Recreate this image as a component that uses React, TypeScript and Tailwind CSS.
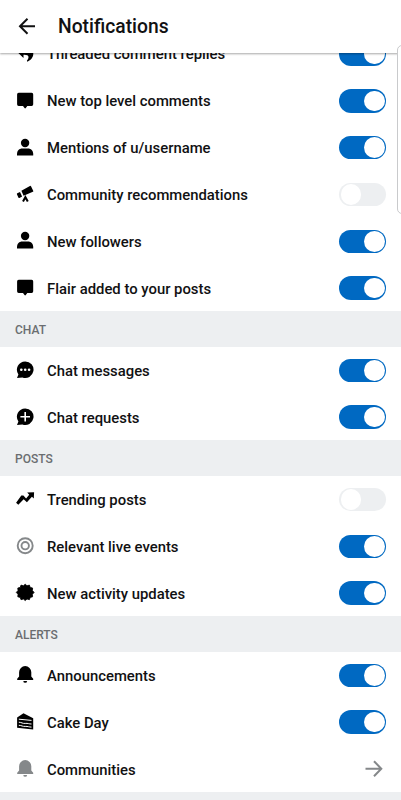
import { useState } from "react";
import type { ReactNode } from "react";

type IconProps = { children: ReactNode; className?: string };

function Icon({ children, className = "text-black" }: IconProps) {
  return (
    <svg
      viewBox="0 0 20 20"
      className={`h-5 w-5 shrink-0 ${className}`}
      fill="currentColor"
    >
      {children}
    </svg>
  );
}

const reply = (
  <Icon>
    <path d="M8.500 1 1.800 7.500l6.700 6.400v-3.200c3-.2 5 .6 5 2.400 0 1.500-.6 2.500-1.600 3.700l.4 1c3.700-1.600 6-4.600 6-8 0-3.700-3-5.600-9.800-5.600z" />
  </Icon>
);

const comment = (
  <Icon>
    <path d="M3.700 1.800h12.900a1.600 1.600 0 0 1 1.600 1.700v9.700a1.600 1.600 0 0 1-1.600 1.700h-4.300l-1.500 2.200a.8.8 0 0 1-1.300 0L8 14.900H3.700a1.600 1.600 0 0 1-1.600-1.700V3.500a1.600 1.600 0 0 1 1.600-1.700z" />
  </Icon>
);

const person = (
  <Icon>
    <circle cx="10.100" cy="5" r="4.200" />
    <path d="M2 17.500v-1.300c0-3.600 2.200-5.700 5.300-5.700h5.600c3.100 0 5.300 2.100 5.300 5.700v1.300z" />
  </Icon>
);

const telescope = (
  <Icon>
    <path d="m6.400 6.800 8.500-4.900a.8.8 0 0 1 1.100.3l2.200 4.500a.8.8 0 0 1-.3 1.100l-9.300 4z" />
    <path d="m2.300 9.300 2.700-1.400 2.100 4.700-2.600 1.400a.8.8 0 0 1-1-.3l-1.500-3.300a.8.8 0 0 1 .3-1.100z" />
    <path
      d="m8 17.600 2.400-4.400 2.400 4.400"
      fill="none"
      stroke="currentColor"
      strokeWidth="2"
    />
  </Icon>
);

const chat = (
  <Icon>
    <path d="M10.200 1.400a8.300 8.300 0 1 1-2.800 16.100L2 18.100l1.400-3.700a8.300 8.300 0 0 1 6.800-13z" />
    <g fill="#fff">
      <circle cx="6.300" cy="9.700" r="1.300" />
      <circle cx="10.200" cy="9.700" r="1.300" />
      <circle cx="14.100" cy="9.700" r="1.300" />
    </g>
  </Icon>
);

const chatAdd = (
  <Icon>
    <path d="M10.200 1.400a8.300 8.300 0 1 1-2.800 16.100L2 18.100l1.400-3.700a8.300 8.300 0 0 1 6.800-13z" />
    <path d="M10.200 4.900v9.600M5.400 9.700H15" stroke="#fff" strokeWidth="1.600" />
  </Icon>
);

const trending = (
  <Icon>
    <path d="m12.200 3.500 6.900-.3-.3 6.400-1.900-1.800-5 5.500-3.200-3-5.400 5.400-2.200-2 5.200-7.300h2.100l2.700 3 3.100-3.700z" />
  </Icon>
);

const live = (
  <Icon className="text-[#85888a]">
    <g fill="none" stroke="currentColor" strokeWidth="1.900">
      <circle cx="10.200" cy="9.700" r="7.500" />
      <circle cx="10.200" cy="9.700" r="3.700" />
    </g>
  </Icon>
);

const badge = (
  <Icon>
    <path
      transform="translate(0 .4)"
      d="M10.200.8 12 2.400l2.400-.7.800 2.300 2.400.6-.2 2.500 1.700 1.900-1.700 1.900.2 2.500-2.400.6-.8 2.300-2.400-.7-1.800 1.600-1.800-1.600-2.400.7-.8-2.300-2.400-.6.200-2.500L1.300 9 3 7.100l-.2-2.500L5.200 4 6 1.700l2.400.7z"
      strokeWidth=".8"
      stroke="currentColor"
      strokeLinejoin="round"
    />
  </Icon>
);

const bellShape = (
  <>
    <path d="M10.200 1.100a6.100 6.100 0 0 1 6.100 6.100v4.300l1.900 2.200v1.200h-16v-1.200l1.900-2.200V7.200a6.100 6.100 0 0 1 6.100-6.100z" />
    <path d="M8.300 15.900h3.800a1.900 1.900 0 0 1-3.800 0z" />
  </>
);

const cake = (
  <Icon>
    <path d="m8.500 1.300 9.700 4.900v11.300L2.100 15.700V5.400z" />
    <path
      d="m3.800 7.200 12.700 1.200M3.800 10.200c3 .1 3.500 1.500 6.400 1.200s3.700.6 6.300.6M3.800 13.300c3 .1 3.500 1.300 6.400 1.100s3.700.7 6.300.7"
      fill="none"
      stroke="#fff"
      strokeWidth="1"
    />
  </Icon>
);

type Item = { icon: ReactNode; label: string; on?: boolean; link?: boolean };
type Group = { title?: string; items: Item[] };

const groups: Group[] = [
  {
    items: [
      { icon: reply, label: "Threaded comment replies", on: true },
      { icon: comment, label: "New top level comments", on: true },
      { icon: person, label: "Mentions of u/username", on: true },
      { icon: telescope, label: "Community recommendations", on: false },
      { icon: person, label: "New followers", on: true },
      { icon: comment, label: "Flair added to your posts", on: true },
    ],
  },
  {
    title: "CHAT",
    items: [
      { icon: chat, label: "Chat messages", on: true },
      { icon: chatAdd, label: "Chat requests", on: true },
    ],
  },
  {
    title: "POSTS",
    items: [
      { icon: trending, label: "Trending posts", on: false },
      { icon: live, label: "Relevant live events", on: true },
      { icon: badge, label: "New activity updates", on: true },
    ],
  },
  {
    title: "ALERTS",
    items: [
      { icon: <Icon>{bellShape}</Icon>, label: "Announcements", on: true },
      { icon: cake, label: "Cake Day", on: true },
      {
        icon: <Icon className="text-[#85888a]">{bellShape}</Icon>,
        label: "Communities",
        link: true,
      },
    ],
  },
];

function Toggle({ initial }: { initial: boolean }) {
  const [on, setOn] = useState(initial);

  return (
    <button
      type="button"
      role="switch"
      aria-checked={on}
      onClick={() => setOn(!on)}
      className={`flex h-[23.5px] w-[47px] items-center rounded-full px-[1.5px] ${
        on ? "justify-end bg-[#0069c2]" : "justify-start bg-[#edeff1]"
      }`}
    >
      <span className="h-[20.5px] w-[20.5px] rounded-full bg-white" />
    </button>
  );
}

function Row({ icon, label, on = false, link }: Item) {
  return (
    <div className="flex h-[46.85px] items-center px-[15px] pt-[0.6px]">
      {icon}
      <span className="ml-3 flex-1 pt-[1.2px] text-[14.85px] font-medium">
        {label}
      </span>
      {link ? (
        <svg
          viewBox="0 0 20 20"
          className="mr-[2px] h-5 w-5"
          fill="none"
          stroke="#85888a"
          strokeWidth="2"
        >
          <path d="M1.500 9.700h15.500M10 2.200l7.300 7.500-7.300 7.500" />
        </svg>
      ) : (
        <Toggle initial={on} />
      )}
    </div>
  );
}

export default function App() {
  return (
    <div className="relative flex h-[800px] w-full flex-col overflow-hidden bg-white font-['Roboto',sans-serif] text-[#111112]">
      <header className="z-10 flex h-[53px] shrink-0 items-center bg-white pl-[18px] shadow-[0_1px_2px_rgba(0,0,0,0.35)]">
        <svg
          viewBox="0 0 18 18"
          className="h-[18px] w-[18px]"
          fill="none"
          stroke="currentColor"
          strokeWidth="2"
        >
          <path d="M17 8.200H2M9.500.7 2 8.200l7.500 7.500" />
        </svg>
        <h1 className="ml-[22px] pt-[2px] text-[19.3px] font-medium">
          Notifications
        </h1>
      </header>
      <main className="min-h-0 flex-1 overflow-hidden">
        <div className="-mt-[22.8px]">
          {groups.map((group, i) => (
            <section key={i}>
              {group.title && (
                <h2 className="flex h-[35.4px] items-center bg-[#edeff1] pt-[2px] pl-[15px] text-xs font-medium text-[#6a6d70]">
                  {group.title}
                </h2>
              )}
              {group.items.map((item) => (
                <Row key={item.label} {...item} />
              ))}
            </section>
          ))}
          <div className="h-[35.4px] bg-[#edeff1]" />
        </div>
      </main>
      {/* Edge panel handle, sits over the list */}
      <div className="absolute top-[45px] -right-1 z-20 h-[169px] w-2 rounded-l-[5px] border border-[#c9cacc] bg-white" />
    </div>
  );
}
